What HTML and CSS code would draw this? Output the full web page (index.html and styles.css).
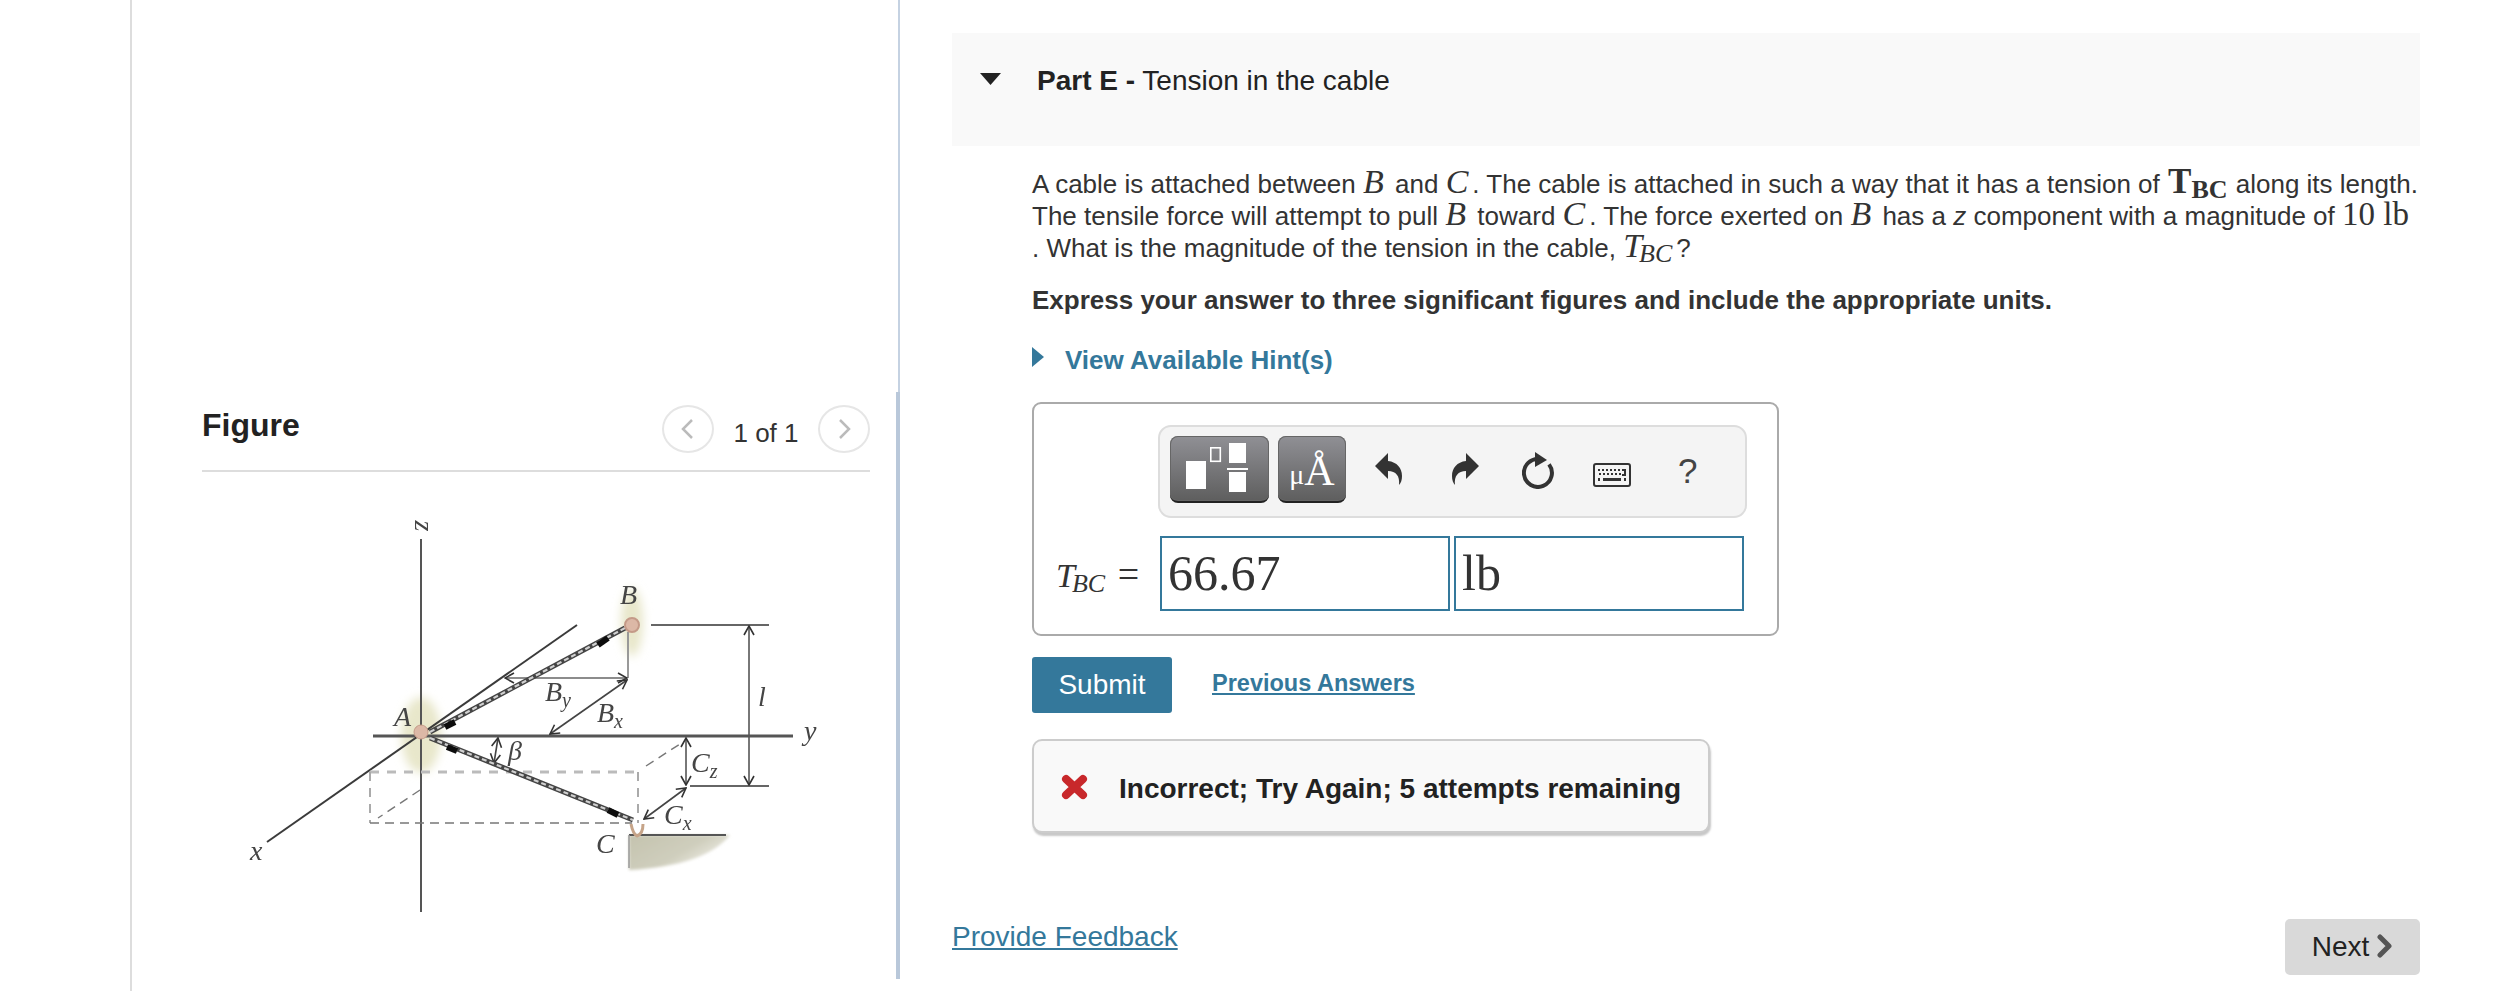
FILE: index.html
```html
<!DOCTYPE html>
<html lang="en">
<head>
<meta charset="utf-8">
<title>Part E - Tension in the cable</title>
<link rel="stylesheet" href="styles.css">
</head>
<body>
<div class="page">
  <div class="rail"></div>
  <aside class="figure-pane">
    <header class="figure-head">
      <h2 class="figure-title">Figure</h2>
      <div class="pager">
        <button class="round"><svg viewBox="0 0 16 24" class="pg"><path d="M12 3 3 12l9 9"/></svg></button>
        <span class="pager-text">1 of 1</span>
        <button class="round"><svg viewBox="0 0 16 24" class="pg"><path d="m4 3 9 9-9 9"/></svg></button>
      </div>
    </header>
    <svg class="diagram" viewBox="202 495 668 430" width="668" height="430">
      <defs>
        <filter id="soft" x="-5%" y="-5%" width="110%" height="110%"><feGaussianBlur stdDeviation="0.7"/></filter>
        <filter id="gblur" x="-10%" y="-20%" width="120%" height="140%"><feGaussianBlur stdDeviation="1.5"/></filter>
        <filter id="halo" x="-60%" y="-60%" width="220%" height="220%"><feGaussianBlur stdDeviation="5"/></filter>
        <linearGradient id="gnd" x1="0" y1="0" x2="1" y2="0.6"><stop offset="0" stop-color="#c4c3ae"/><stop offset="0.6" stop-color="#cfceBd"/><stop offset="1" stop-color="#f2f1ea"/></linearGradient>
        <marker id="ah" viewBox="0 0 12 12" refX="11" refY="6" markerWidth="12" markerHeight="12" markerUnits="userSpaceOnUse" orient="auto-start-reverse"><path d="M2 1 11 6 2 11" fill="none" stroke="#333" stroke-width="1.6"/></marker>
      </defs>
      <ellipse cx="632" cy="622" rx="11" ry="34" fill="#e8e7cb" filter="url(#halo)"/>
      <ellipse cx="421" cy="735" rx="20" ry="38" fill="#e8e7cb" filter="url(#halo)"/>
      <path d="M629 835H730Q705 866 629 870Z" fill="url(#gnd)" filter="url(#gblur)"/>
      <g filter="url(#soft)" fill="none">
        <path d="M421 539V912" stroke="#555" stroke-width="2"/>
        <path d="M373 736H793" stroke="#555" stroke-width="3"/>
        <path d="M267 842 577 625" stroke="#3a3a3a" stroke-width="2"/>
        <path d="M370 772H638" stroke="#bbb" stroke-width="3" stroke-dasharray="9 8"/>
        <path d="M370 772V823M638 772V823" stroke="#aaa" stroke-width="2" stroke-dasharray="9 7"/>
        <path d="M370 823H632" stroke="#777" stroke-width="1.6" stroke-dasharray="9 6"/>
        <path d="M420 790 378 818M646 766 680 744" stroke="#777" stroke-width="1.4" stroke-dasharray="9 6"/>
        <path d="M628 632V678" stroke="#999" stroke-width="2"/>
        <path d="M505 678H627" stroke="#666" stroke-width="1.6" marker-start="url(#ah)" marker-end="url(#ah)"/>
        <path d="M550 734 627 680" stroke="#444" stroke-width="1.6" marker-start="url(#ah)" marker-end="url(#ah)"/>
        <path d="M498 738 494 763" stroke="#444" stroke-width="1.6" marker-start="url(#ah)" marker-end="url(#ah)"/>
        <path d="M651 625H769M690 786H769" stroke="#666" stroke-width="2"/>
        <path d="M749 626V785" stroke="#555" stroke-width="1.6" marker-start="url(#ah)" marker-end="url(#ah)"/>
        <path d="M686 738V785" stroke="#555" stroke-width="1.6" marker-start="url(#ah)" marker-end="url(#ah)"/>
        <path d="M686 788 644 819" stroke="#444" stroke-width="1.6" marker-start="url(#ah)" marker-end="url(#ah)"/>
        <path d="M629 835H726" stroke="#555" stroke-width="2"/>
        <path d="M629 835V868" stroke="#999" stroke-width="1.5"/>
        <path d="M430 732 625 628M430 738 633 820" stroke="#444" stroke-width="5"/>
        <path d="M430 732 625 628M430 738 633 820" stroke="#d0d0d0" stroke-width="2.2" stroke-dasharray="5 3"/>
        <path d="M445 727 455 722M598 645 608 638M447 747 457 751M608 810 618 815" stroke="#111" stroke-width="6"/>
        <circle cx="632" cy="625" r="7" fill="#dcb8a6" stroke="#c49a88" stroke-width="2"/>
        <circle cx="421" cy="732" r="7" fill="#dcb8a6" stroke="#c49a88" stroke-width="1"/>
        <path d="M631 824q2 10 6 12q6-2 6-12" stroke="#c6a488" stroke-width="3"/>
      </g>
      <g class="dl" filter="url(#soft)">
        <text x="419" y="535" class="lb lb-z">z</text>
        <text x="804" y="740" class="lb">y</text>
        <text x="250" y="860" class="lb">x</text>
        <text x="394" y="726" class="lb">A</text>
        <text x="620" y="604" class="lb">B</text>
        <text x="596" y="853" class="lb">C</text>
        <text x="545" y="701" class="lb">B<tspan class="lbsub" dy="6">y</tspan></text>
        <text x="597" y="722" class="lb">B<tspan class="lbsub" dy="6">x</tspan></text>
        <text x="508" y="760" class="lb">β</text>
        <text x="758" y="706" class="lb">l</text>
        <text x="691" y="772" class="lb">C<tspan class="lbsub" dy="6">z</tspan></text>
        <text x="664" y="824" class="lb">C<tspan class="lbsub" dy="6">x</tspan></text>
      </g>
    </svg>
  </aside>
  <div class="divider"><div class="divider-thumb"></div></div>
  <main class="main-pane">
    <section class="part-head">
      <svg class="part-caret" viewBox="0 0 21 12"><path d="M0 0H21L10.500 12Z"/></svg>
      <h1 class="part-title"><b>Part E -</b> Tension in the cable</h1>
    </section>
    <div class="part-body">
      <p class="question">A cable is attached between <i class="m">B</i> and <i class="m">C</i>. The cable is attached in such a way that it has a tension of <b class="mb">T<sub>BC</sub></b> along its length.<br>The tensile force will attempt to pull <i class="m">B</i> toward <i class="m">C</i>. The force exerted on <i class="m">B</i> has a <i>z</i> component with a magnitude of <span class="mr">10 lb</span><br>. What is the magnitude of the tension in the cable, <i class="m">T<sub>BC</sub></i>?</p>
      <p class="instruction">Express your answer to three significant figures and include the appropriate units.</p>
      <a class="hint"><svg class="hint-caret" viewBox="0 0 12 20"><path d="M0 0 12 10 0 20Z"/></svg>View Available Hint(s)</a>
      <div class="answer">
        <div class="toolbar">
          <button class="tool tool-a">
            <svg viewBox="0 0 99 67" width="99" height="67"><path d="M16 26H36V54H16ZM59 8H76V28H59ZM57 33H78V35H57ZM59 37H76V57H59Z" fill="#fff"/><rect x="40.800" y="12.800" width="9.500" height="13.500" fill="none" stroke="#fff" stroke-width="1.600"/></svg>
          </button>
          <button class="tool tool-b"><span class="mu">μ</span><span class="ang">Å</span></button>
          <svg class="ic ic-undo" viewBox="0 0 27 32"><path d="M0 13 13 0V8C22 9 27 15 27 23c0 4-1 7-3 9 1-9-3-14-11-14v8Z"/></svg>
          <svg class="ic ic-redo" viewBox="0 0 27 32"><path d="M27 13 14 0V8C5 9 0 15 0 23c0 4 1 7 3 9-1-9 3-14 11-14v8Z"/></svg>
          <svg class="ic ic-reset" viewBox="0 0 32 37"><path d="M18 7.100A14 14 0 1 0 27 12.400" fill="none" stroke="#333" stroke-width="4"/><path d="M13 0 25 8 13 15Z" fill="#333"/></svg>
          <svg class="ic ic-keys" viewBox="0 0 38 24"><rect x="1" y="1" width="36" height="22" rx="2" fill="#f4f4f4" stroke="#333" stroke-width="2"/><path d="M5 6h2v2H5zM9 6h2v2H9zM13 6h2v2h-2zM17 6h2v2h-2zM21 6h2v2h-2zM25 6h2v2h-2zM29 6h4v7h-4v-2h2V8h-2zM6 10h2v2H6zM10 10h2v2h-2zM14 10h2v2h-2zM18 10h2v2h-2zM22 10h2v2h-2zM26 10h2v2h-2zM5 15h2v3H5zM10 15h18v3H10zM31 15h2v3h-2z" fill="#333"/></svg>
          <span class="tool-help">?</span>
        </div>
        <div class="answer-row">
          <span class="answer-label"><i class="m">T<sub>BC</sub></i> <span class="eq">=</span></span>
          <div class="field">66.67</div>
          <div class="field">lb</div>
        </div>
      </div>
      <div class="actions">
        <button class="submit">Submit</button>
        <a class="prev">Previous Answers</a>
      </div>
      <div class="feedback">
        <svg class="cross" viewBox="0 0 27 26"><path d="M5 5 22 21M22 5 5 21"/></svg>
        <span class="feedback-text">Incorrect; Try Again; 5 attempts remaining</span>
      </div>
    </div>
    <footer class="pane-foot">
      <a class="feedback-link">Provide Feedback</a>
      <button class="next">Next<svg class="next-ic" viewBox="0 0 16 24"><path d="M3 3 12 12 3 21" /></svg></button>
    </footer>
  </main>
</div>
</body>
</html>
```
FILE: styles.css
```css
* { box-sizing: border-box; }
html, body { margin: 0; height: 100%; background: #fff; overflow: hidden; }
body { font-family: "Liberation Sans", Arial, sans-serif; font-size: 28px; color: #333; }
button { font: inherit; padding: 0; }
.page { display: flex; height: 991px; width: 2512px; }
.rail { width: 132px; flex: none; border-right: 2px solid #ddd; }

.figure-pane { width: 764px; flex: none; padding: 405px 26px 0 70px; display: flex; flex-direction: column; }
.figure-head { display: flex; justify-content: space-between; align-items: flex-start; height: 67px; border-bottom: 2px solid #ddd; }
.figure-title { margin: 0; font-size: 32px; line-height: 40px; font-weight: 700; color: #222; }
.pager { display: flex; align-items: center; }
.round { width: 52px; height: 48px; border-radius: 50%; border: 2px solid #e6e6e6; background: #fff; display: flex; align-items: center; justify-content: center; }
.pg { width: 16px; height: 24px; fill: none; stroke: #bbb; stroke-width: 2.500; }
.pager-text { width: 104px; text-align: center; font-size: 26px; padding-top: 8px; color: #333; }
.diagram { display: block; margin-top: 23px; }
.lb { font: italic 28px "Liberation Serif", serif; fill: #444; }
.lb-z { transform-box: fill-box; transform-origin: center; transform: rotate(90deg); }
.lbsub { font-size: 20px; }

.divider { width: 4px; flex: none; height: 979px; display: flex; flex-direction: column; align-items: flex-end; background: linear-gradient(#c5d2e2, #c5d2e2) right top / 2px 100% no-repeat; padding-top: 392px; }
.divider-thumb { width: 4px; height: 587px; background: #b9c8da; }

.main-pane { width: 1612px; flex: none; padding: 33px 0 0 52px; }
.part-head { width: 1468px; height: 113px; background: #f9f9f9; display: flex; align-items: flex-start; padding: 30px 0 0 28px; }
.part-caret { width: 21px; height: 12px; margin: 10px 36px 0 0; fill: #222; }
.part-title { margin: 0; font-size: 28px; line-height: 36px; font-weight: 400; color: #222; }
.part-title b { font-weight: 700; }
.part-body { padding-left: 80px; width: 1500px; }
.question { margin: 22px 0 0; font-size: 26px; line-height: 32px; white-space: nowrap; }
.m { font: italic 34px/0 "Liberation Serif", serif; color: #333; padding-right: 4px; }
.m sub { font-size: 26px; line-height: 0; vertical-align: -5px; margin-left: -3px; }
.mb { font: 700 35px/0 "Liberation Serif", serif; padding: 0 1px; }
.mb sub { font-size: 26px; line-height: 0; vertical-align: -5px; }
.mr { font: 33px/0 "Liberation Serif", serif; }
.instruction { margin: 20px 0 0; font-size: 26px; font-weight: 700; line-height: 32px; }
.hint { display: flex; align-items: center; margin-top: 28px; height: 32px; font-size: 26px; font-weight: 700; color: #34789b; }
.hint-caret { width: 12px; height: 20px; fill: #34789b; margin: -6px 21px 0 0; }

.answer { margin-top: 26px; width: 747px; height: 234px; border: 2px solid #aaa; border-radius: 9px; padding: 21px 0 0 124px; }
.toolbar { width: 589px; height: 93px; background: #f4f4f4; border: 2px solid #ddd; border-radius: 13px; display: flex; align-items: flex-start; padding-top: 9px; padding-left: 10px; }
.tool { height: 67px; border: 0; border-bottom: 2px solid #222; border-radius: 8px; background: linear-gradient(#909095, #5e5e5e); box-shadow: inset 0 0 0 1px #666; color: #fff; display: flex; align-items: center; justify-content: center; overflow: hidden; }
.tool-a { width: 99px; }
.tool-b { width: 68px; margin-left: 9px; font-family: "Liberation Serif", serif; line-height: 1; align-items: flex-end; padding-bottom: 12px; }
.mu { font-size: 28px; }
.ang { font-size: 42px; line-height: 36px; }
.ic { flex: none; fill: #333; }
.ic-undo { width: 27px; height: 32px; margin: 17px 0 0 29px; }
.ic-redo { width: 27px; height: 32px; margin: 17px 0 0 50px; }
.ic-reset { width: 32px; height: 37px; margin: 16px 0 0 43px; }
.ic-keys { width: 38px; height: 24px; margin: 27px 0 0 39px; }
.tool-help { margin: 15px 0 0 47px; font-size: 35px; line-height: 40px; color: #444; }
.answer-row { display: flex; align-items: flex-start; margin: 18px 0 0 -124px; }
.answer-label { width: 126px; padding: 16px 0 0 22px; font-size: 31px; line-height: 40px; white-space: nowrap; color: #333; }
.eq { font: 38px "Liberation Serif", serif; margin-left: 0; }
.field { width: 290px; height: 75px; border: 2px solid #34789b; background: #fff; font: 50px/70px "Liberation Serif", serif; padding-left: 6px; margin-right: 4px; color: #333; }
.actions { display: flex; align-items: center; margin-top: 21px; }
.submit { width: 140px; height: 56px; background: #34789b; color: #fff; border: 0; border-radius: 3px; font-size: 28px; }
.prev { margin: -3px 0 0 40px; font-size: 23.500px; font-weight: 700; color: #34789b; text-decoration: underline; }
.feedback { margin-top: 26px; width: 678px; height: 94px; background: #f9f9f9; border: 2px solid #ccc; border-radius: 10px; box-shadow: 1px 3px 2px #c8c8c8; display: flex; align-items: center; padding-left: 27px; font-weight: 700; color: #222; white-space: nowrap; }
.feedback-text { padding-top: 5px; }
.cross { width: 27px; height: 26px; fill: none; stroke: #c8282b; stroke-width: 8; stroke-linecap: round; margin: 2px 31px 0 0; flex: none; }

.pane-foot { display: flex; justify-content: space-between; align-items: center; width: 1468px; margin-top: 86px; }
.feedback-link { color: #34789b; text-decoration: underline; margin-top: -20px; }
.next { width: 135px; height: 56px; background: #d9d9d9; border: 0; border-radius: 5px; color: #222; display: flex; align-items: center; justify-content: center; gap: 8px; }
.next-ic { width: 16px; height: 24px; fill: none; stroke: #555; stroke-width: 5; stroke-linecap: round; stroke-linejoin: round; margin-top: -2px; }
```
